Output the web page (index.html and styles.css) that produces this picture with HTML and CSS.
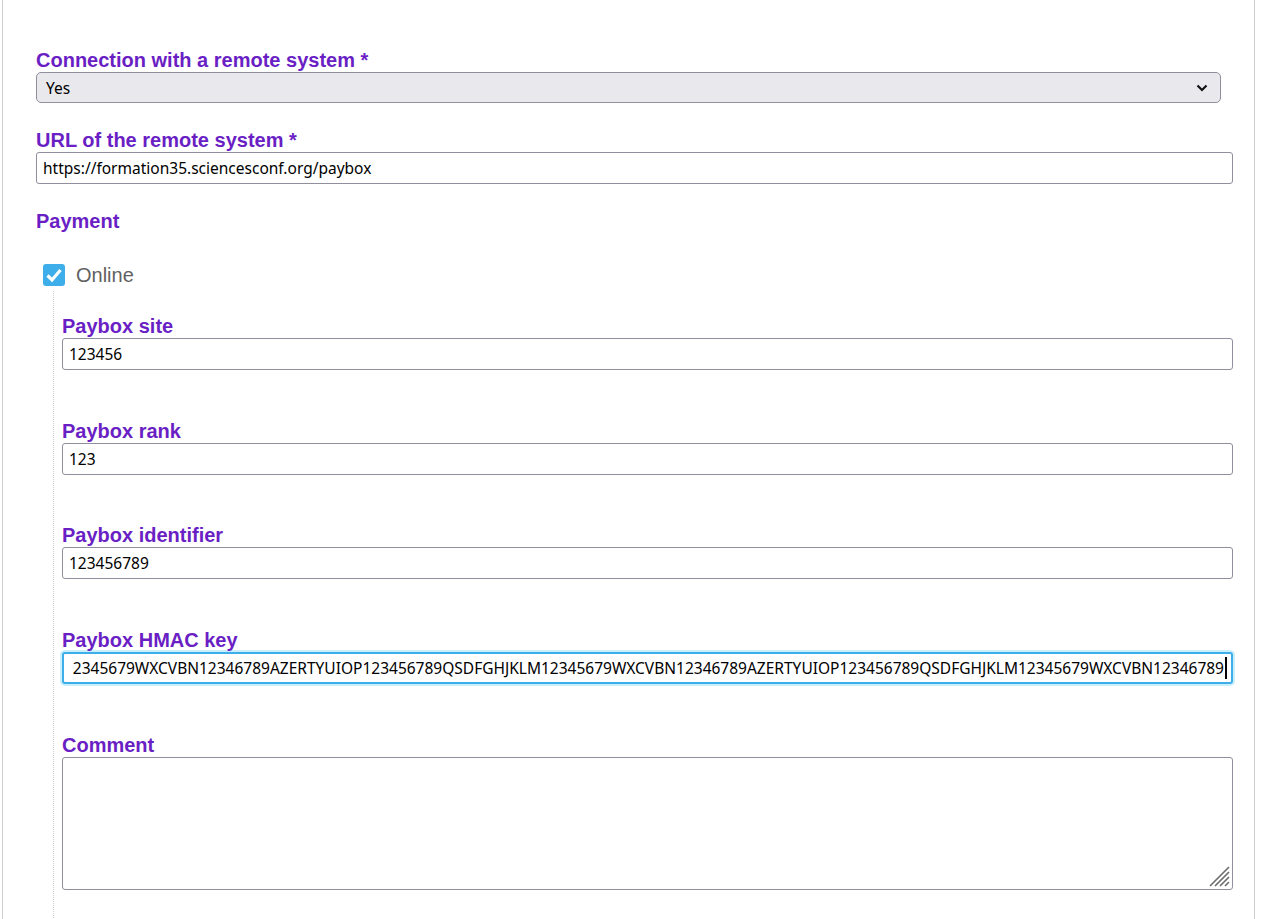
FILE: index.html
```html
<!DOCTYPE html>
<html>
<head>
<meta charset="utf-8">
<link rel="stylesheet" href="styles.css">
</head>
<body>
<div class="panel">
  <div class="field">
    <label class="lbl">Connection with a remote system *</label>
    <div class="select">
      <span>Yes</span>
      <svg class="chev" width="12" height="8" viewBox="0 0 12 8"><path d="M1.5 1.5 L6 6 L10.5 1.5" fill="none" stroke="#111" stroke-width="2.2"/></svg>
    </div>
  </div>
  <div class="field">
    <label class="lbl">URL of the remote system *</label>
    <div class="input">https://formation35.sciencesconf.org/paybox</div>
  </div>
  <div class="section-title">Payment</div>
  <div class="check-row">
    <span class="checkbox"><svg width="18" height="16" viewBox="0 0 18 16"><path d="M2.5 8.5 L7 13 L15.5 3" fill="none" stroke="#fff" stroke-width="3.2"/></svg></span>
    <span class="check-label">Online</span>
  </div>
  <div class="sub">
    <div class="subfield">
      <label class="lbl">Paybox site</label>
      <div class="input">123456</div>
    </div>
    <div class="subfield">
      <label class="lbl">Paybox rank</label>
      <div class="input">123</div>
    </div>
    <div class="subfield">
      <label class="lbl">Paybox identifier</label>
      <div class="input">123456789</div>
    </div>
    <div class="subfield">
      <label class="lbl">Paybox HMAC key</label>
      <div class="input focus"><span class="scroll">2345679WXCVBN12346789AZERTYUIOP123456789QSDFGHJKLM12345679WXCVBN12346789AZERTYUIOP123456789QSDFGHJKLM12345679WXCVBN12346789</span><span class="caret"></span></div>
    </div>
    <div class="subfield">
      <label class="lbl">Comment</label>
      <div class="textarea">
        <svg class="grip" width="22" height="22" viewBox="0 0 22 22"><path d="M21 2 L2 21 M21 7 L7 21 M21 12 L12 21 M21 17 L17 21" stroke="#6b6b6b" stroke-width="1.6" fill="none"/></svg>
      </div>
    </div>
  </div>
</div>
</body>
</html>
```

FILE: styles.css
```css
html, body {
  margin: 0;
  padding: 0;
  background: #fff;
}
body {
  width: 1273px;
  height: 919px;
  overflow: hidden;
}
.panel {
  margin-left: 2px;
  width: 1253px;
  height: 919px;
  box-sizing: border-box;
  border-left: 1px solid #cfcfcf;
  border-right: 1px solid #cfcfcf;
  padding: 48px 21px 0 33px;
  overflow: hidden;
}
.lbl {
  display: block;
  font-family: "Liberation Sans", Arial, sans-serif;
  font-weight: bold;
  font-size: 20px;
  line-height: 24px;
  color: #6a1fc5;
}
.field {
  margin-bottom: 25px;
}
.select {
  width: calc(100% - 12px);
  height: 31px;
  box-sizing: border-box;
  background: #e9e9ed;
  border: 1px solid #8f8f9d;
  border-radius: 5px;
  display: flex;
  align-items: center;
  justify-content: space-between;
  padding: 0 12px 0 9px;
  font-family: "Noto Sans", sans-serif;
  font-size: 15.5px;
  color: #000;
}
.chev {
  display: block;
}
.input {
  height: 32px;
  box-sizing: border-box;
  border: 1px solid #8f8f9d;
  border-radius: 3px;
  background: #fff;
  padding: 0 6px;
  display: flex;
  align-items: center;
  font-family: "Noto Sans", sans-serif;
  font-size: 15.5px;
  color: #000;
  white-space: nowrap;
  overflow: hidden;
}
.input.focus {
  border: 2px solid #3daee9;
  box-shadow: 0 0 0 2px #c9effc;
  padding: 0 4px 0 8px;
  justify-content: flex-end;
}
.caret {
  display: inline-block;
  width: 2px;
  height: 22px;
  background: #000;
  margin-left: 1px;
  flex: none;
}
.section-title {
  font-family: "Liberation Sans", Arial, sans-serif;
  font-weight: bold;
  font-size: 20px;
  line-height: 24px;
  color: #6a1fc5;
  margin-top: 6px;
}
.check-row {
  display: flex;
  align-items: center;
  margin-top: 31px;
  padding-left: 7px;
  height: 22px;
}
.checkbox {
  width: 22px;
  height: 22px;
  border-radius: 3px;
  background: #3daee9;
  display: flex;
  align-items: center;
  justify-content: center;
}
.check-label {
  margin-left: 11px;
  font-family: "Liberation Sans", Arial, sans-serif;
  font-size: 20px;
  color: #616161;
}
.sub {
  margin-left: 17px;
  margin-top: 5px;
  border-left: 1px dotted #cfcfcf;
  padding-left: 8px;
  padding-top: 23px;
  height: 700px;
}
.subfield {
  margin-bottom: 48.7px;
}
.textarea {
  position: relative;
  height: 133px;
  box-sizing: border-box;
  border: 1px solid #8f8f9d;
  border-radius: 3px;
}
.grip {
  position: absolute;
  right: 2px;
  bottom: 2px;
}
```
